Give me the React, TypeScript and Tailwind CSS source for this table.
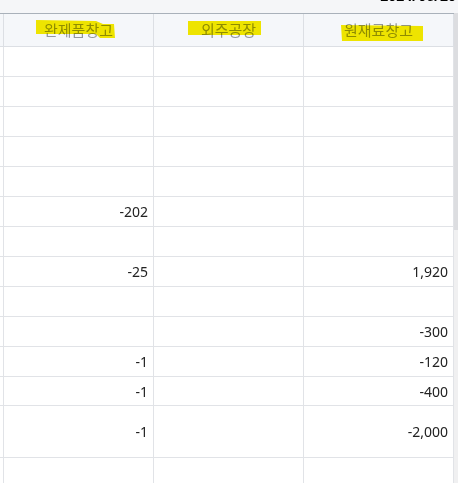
const cols = [
  { label: "완제품창고" },
  { label: "외주공장" },
  { label: "원재료창고" },
];

type Row = { h: string; a?: string; b?: string; c?: string };

const rows: Row[] = [
  { h: "h-[30px]" },
  { h: "h-[30px]" },
  { h: "h-[30px]" },
  { h: "h-[30px]" },
  { h: "h-[30px]" },
  { h: "h-[30px]", a: "-202" },
  { h: "h-[30px]" },
  { h: "h-[30px]", a: "-25", c: "1,920" },
  { h: "h-[30px]" },
  { h: "h-[30px]", c: "-300" },
  { h: "h-[30px]", a: "-1", c: "-120" },
  { h: "h-[29px]", a: "-1", c: "-400" },
  { h: "h-[52px]", a: "-1", c: "-2,000" },
  { h: "h-[40px]" },
];

function Cell({ value }: { value?: string }) {
  return (
    <div className="w-[150px] shrink-0 border-r border-[#e1e3e7] flex items-center justify-end pr-[5px] text-[14px] text-[#222222]">
      {value}
    </div>
  );
}

export default function App() {
  return (
    <div
      className="w-[458px] h-[483px] overflow-hidden bg-[#f5f6f8] relative"
      style={{ fontFamily: '"Noto Sans", "Noto Sans CJK KR", sans-serif' }}
    >
      {/* date line, mostly scrolled out of view */}
      <div className="h-[13px] overflow-hidden flex justify-end pr-[2px]">
        <span className="-mt-[12px] text-[14px] font-bold leading-[16px] text-black">
          2024/06/20
        </span>
      </div>

      <div className="flex">
        <div className="w-[454px] shrink-0 bg-white">
          {/* header */}
          <div className="flex h-[34px] border-t border-b border-t-[#a9b1ba] border-b-[#dcdfe4] bg-[#f5f7fa]">
            <div className="w-[4px] shrink-0 border-r border-[#dcdfe4]" />
            {cols.map((c) => (
              <div
                key={c.label}
                className="w-[150px] shrink-0 border-r border-[#dcdfe4] flex items-center justify-center pt-[1px] text-[15px] text-[#93979d]"
                style={{ fontFamily: '"Noto Sans CJK KR", sans-serif' }}
              >
                {c.label}
              </div>
            ))}
          </div>

          {/* body */}
          {rows.map((r, i) => (
            <div key={i} className={`flex ${r.h} border-b border-[#e1e3e7]`}>
              <div className="w-[4px] shrink-0 border-r border-[#e1e3e7]" />
              <Cell value={r.a} />
              <Cell value={r.b} />
              <Cell value={r.c} />
            </div>
          ))}
        </div>

        {/* scrollbar */}
        <div className="w-[4px] shrink-0 flex flex-col bg-[#f0f0f1] h-[470px]">
          <div className="h-[217px] bg-[#dcdde0]" />
        </div>
      </div>

      {/* highlighter marks */}
      <svg
        className="absolute inset-0 pointer-events-none mix-blend-multiply"
        width="458"
        height="483"
        viewBox="0 0 458 483"
      >
        <polygon
          points="36,20 96,21 103,24 114,24 115,38 100,38 96,34 36,34"
          fill="#f8ec00"
        />
        <polygon points="188,21 261,21 261,35 188,35" fill="#f8ec00" />
        <polygon points="341,25 423,26 423,41 342,41" fill="#f8ec00" />
      </svg>
    </div>
  );
}
